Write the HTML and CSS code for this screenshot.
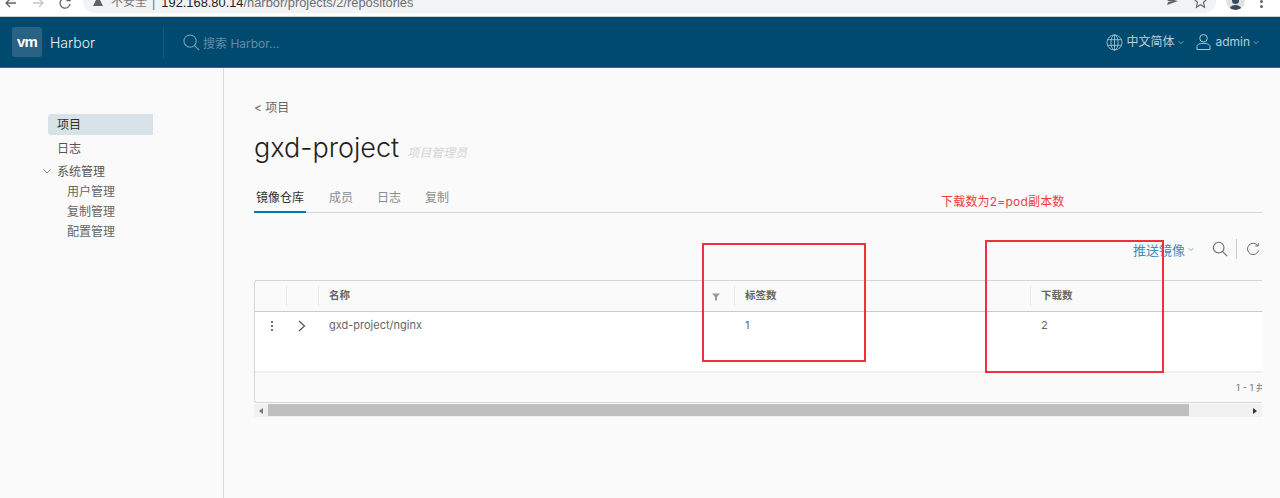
FILE: index.html
```html
<!DOCTYPE html>
<html lang="zh">
<head>
<meta charset="utf-8">
<title>Harbor</title>
<link rel="stylesheet" href="styles.css">
</head>
<body>
<div class="chrome">
  <div class="nav-icons">
    <svg class="c-icon" viewBox="0 0 12 12"><path d="M11 3H1.500M5 -1 1 3l4 4" /></svg>
    <svg class="c-icon faint" viewBox="0 0 12 12"><path d="M1 3h9.500M7 -1l4 4-4 4" /></svg>
    <svg class="c-icon" viewBox="0 0 12 12"><path d="M9.500 -.5A5 5 0 1 0 11 4M11 -3v3.500H7.500" /></svg>
  </div>
  <div class="omnibox">
    <span class="warn"></span>
    <span class="insecure">不安全</span>
    <span class="pipe">|</span>
    <span class="url"><b>192.168.80.14</b>/harbor/projects/2/repositories</span>
    <span class="omni-right">
      <svg class="share" viewBox="0 0 14 10"><path d="M0 1l13 3.500L1 9l1-3.500h5l-5-1z"/></svg>
      <svg class="star" viewBox="0 0 14 14"><path d="M7 -3l2 5 5 .4-3.800 3.200L11.400 11 7 8.300 2.600 11l1.200-5.400L0 2.400 5 2z"/></svg>
    </span>
  </div>
  <div class="avatar"><span class="avatar-head"></span><span class="avatar-body"></span></div>
  <div class="dots"><i></i><i></i></div>
</div>

<header class="topbar">
  <div class="brand">
    <span class="logo">vm</span>
    <span class="brand-name">Harbor</span>
  </div>
  <div class="search">
    <svg class="search-icon" viewBox="0 0 18 18"><circle cx="7.500" cy="7.500" r="6.500"/><path d="M12.300 12.300 17 17"/></svg>
    <span>搜索 Harbor...</span>
  </div>
  <div class="top-right">
    <svg class="globe" viewBox="0 0 18 18"><circle cx="9" cy="9" r="8"/><ellipse cx="9" cy="9" rx="3.800" ry="8"/><path d="M9 1v16M1.500 6h15M1.500 12h15"/></svg>
    <span class="top-label">中文简体</span>
    <svg class="caret" viewBox="0 0 8 5"><path d="M1 1l3 3 3-3"/></svg>
    <svg class="user" viewBox="0 0 16 18"><circle cx="8" cy="5" r="4"/><path d="M1 17v-3c0-2 2-3.500 7-3.500s7 1.500 7 3.500v3z"/></svg>
    <span class="top-label">admin</span>
    <svg class="caret caret-end" viewBox="0 0 8 5"><path d="M1 1l3 3 3-3"/></svg>
  </div>
</header>

<div class="layout">
  <nav class="sidebar">
    <a class="side-item active">项目</a>
    <a class="side-item">日志</a>
    <div class="side-group">
      <svg class="group-caret" viewBox="0 0 8 5"><path d="M.500 .500 4 4 7.500 .500"/></svg>
      <span>系统管理</span>
    </div>
    <a class="side-sub">用户管理</a>
    <a class="side-sub">复制管理</a>
    <a class="side-sub">配置管理</a>
  </nav>

  <main class="content">
    <div class="crumb">&lt; 项目</div>
    <div class="title-row">
      <h1>gxd-project</h1>
      <span class="role">项目管理员</span>
    </div>
    <div class="tabs">
      <span class="tab current">镜像仓库</span>
      <span class="tab">成员</span>
      <span class="tab">日志</span>
      <span class="tab">复制</span>
    </div>
    <div class="toolbar">
      <span class="push">推送镜像</span>
      <svg class="push-caret" viewBox="0 0 8 5"><path d="M1 1l3 3 3-3"/></svg>
      <svg class="tool-search" viewBox="0 0 18 18"><circle cx="7.500" cy="7.500" r="6"/><path d="M12 12l5 5"/></svg>
      <span class="tool-sep"></span>
      <svg class="tool-refresh" viewBox="0 0 16 16"><path d="M13.500 3.500A6.500 6.500 0 1 0 14.500 9M14 .5v3.500h-3.500"/></svg>
    </div>
    <div class="grid">
      <div class="g-row head">
        <div class="cell"></div>
        <div class="cell sep"></div>
        <div class="cell sep name-col">名称<svg class="filter" viewBox="0 0 8 8"><path d="M0 .500h8L5 4v3.500H3V4z"/></svg></div>
        <div class="cell sep">标签数</div>
        <div class="cell sep">下载数</div>
      </div>
      <div class="g-row body">
        <div class="cell dots-cell"><i></i><i></i><i></i></div>
        <div class="cell chev-cell"><svg class="chev" viewBox="0 0 8 12"><path d="M1 1l5.500 5L1 11"/></svg></div>
        <div class="cell">gxd-project/nginx</div>
        <div class="cell">1</div>
        <div class="cell">2</div>
      </div>
      <div class="g-foot">1 - 1 共 1 条记录</div>
    </div>
    <div class="scrollbar">
      <span class="arrow-l"></span>
      <span class="thumb"></span>
      <span class="arrow-r"></span>
    </div>
  </main>
</div>

<div class="note-box note-a"></div>
<div class="note-box note-b"></div>
<div class="note-text">下载数为2=pod副本数</div>
</body>
</html>
```
FILE: styles.css
```css
* { box-sizing: border-box; }
html, body { margin: 0; padding: 0; height: 498px; overflow: hidden; }
body {
  position: relative;
  display: flex;
  flex-direction: column;
  background: #fafafa;
  color: #565656;
  font-family: Inter, "Noto Sans CJK SC", sans-serif;
}

/* browser strip */
.chrome {
  height: 17px;
  flex: none;
  background: #fff;
  border-bottom: 1px solid #c9d3d8;
  display: flex;
  align-items: flex-start;
  overflow: hidden;
}
.nav-icons { width: 83px; height: 12px; flex: none; display: flex; gap: 15px; padding-left: 5px; }
.c-icon { width: 12px; height: 12px; flex: none; fill: none; stroke: #5f6368; stroke-width: 1.300; }
.c-icon.faint { stroke: #c4c7ca; }
.omnibox {
  width: 1133px;
  height: 13px;
  flex: none;
  background: #f1f3f4;
  border-radius: 0 0 12px 12px;
  display: flex;
  align-items: center;
  font: 12.850px/13px "Liberation Sans", "Noto Sans CJK SC", sans-serif;
  color: #6b6f73;
  padding-left: 10px;
  overflow: hidden;
}
.omnibox > span { position: relative; top: -4px; }
.omnibox > .warn { width: 0; height: 0; border-left: 5px solid transparent; border-right: 5px solid transparent; border-bottom: 10px solid #5f6368; margin-right: 8px; top: -6px; }
.insecure { margin-right: 5px; color: #777; font-size: 12px; }
.pipe { margin-right: 6px; color: #777; }
.url b { font-weight: 400; color: #202124; }
.omnibox > .omni-right { top: 0; height: 13px; margin-left: auto; display: flex; align-items: flex-start; gap: 15px; padding-right: 9px; }
.share { width: 13px; height: 9px; fill: #5f6368; margin-top: -3px; }
.star { width: 13px; height: 13px; fill: none; stroke: #5f6368; stroke-width: 1.200; margin-top: -3px; }
.avatar {
  position: relative;
  width: 19px;
  height: 10px;
  margin-left: 10px;
  background: #dfe1e5;
  border-radius: 0 0 10px 10px;
  overflow: hidden;
  flex: none;
}
.avatar-head { position: absolute; left: 6px; top: -3px; width: 7px; height: 7px; background: #3c4a5c; border-radius: 50%; }
.avatar-body { position: absolute; left: 3px; top: 5px; width: 13px; height: 7px; background: #3c4a5c; border-radius: 6px 6px 0 0; }
.dots { display: flex; flex-direction: column; gap: 2px; margin-left: 15px; }
.dots i { width: 3px; height: 3px; border-radius: 50%; background: #5f6368; }

/* header */
.topbar {
  height: 51px;
  flex: none;
  background: #004a70;
  border-bottom: 1px solid #2a6a8e;
  display: flex;
  align-items: center;
  color: #fff;
}
.brand { width: 164px; height: 32px; padding-left: 12px; display: flex; align-items: center; flex: none; border-right: 1px solid #0f5a80; }
.logo {
  width: 30px;
  height: 30px;
  border-radius: 3px;
  background: #2a6283;
  font: 700 15px/29px "Liberation Sans", sans-serif;
  letter-spacing: -.8px;
  text-align: center;
}
.brand-name { margin-left: 8px; font-size: 14px; font-weight: 300; color: #e8f1f5; }
.search { margin-left: 19px; display: flex; align-items: center; gap: 3px; font-size: 12px; color: #5f8fa8; }
.search-icon { width: 17px; height: 17px; fill: none; stroke: #7da3b8; stroke-width: 1.100; }
.top-right { margin-left: auto; padding-right: 21px; display: flex; align-items: center; color: #b9d0dc; font-size: 12px; }
.globe { width: 17px; height: 17px; fill: none; stroke: #a9c4d2; stroke-width: .9; margin-right: 3px; }
.top-label { font-size: 12px; line-height: 16px; }
.caret { width: 6px; height: 5px; margin-left: 4px; fill: none; stroke: #a9c4d2; }
.caret-end { margin-left: 3px; }
.user { width: 15px; height: 18px; margin: 0 4px 0 12px; fill: none; stroke: #b9d0dc; stroke-width: 1; }

/* layout */
.layout { flex: 1; display: flex; min-height: 0; }
.sidebar {
  width: 224px;
  flex: none;
  border-right: 1px solid #d7d7d7;
  padding: 46px 0 0 48px;
  font-size: 12px;
  color: #565656;
}
.side-item { display: block; width: 105px; height: 21px; line-height: 21px; padding-left: 9px; margin-bottom: 3px; }
.side-item.active { background: #d8e3e9; color: #313131; border-radius: 3px 0 0 3px; }
.side-group { position: relative; height: 20px; line-height: 20px; padding-left: 9px; margin-top: 2px; }
.group-caret { position: absolute; left: -5px; top: 7px; width: 8px; height: 5px; fill: none; stroke: #8b8b8b; }
.side-sub { display: block; height: 20px; line-height: 20px; padding-left: 19px; color: #666; }

/* content */
.content { flex: 1; min-width: 0; padding: 31px 18px 0 30px; }
.crumb { font-size: 12px; line-height: 18px; color: #666; }
.title-row { display: flex; align-items: flex-end; margin-top: 13px; height: 36px; }
h1 { margin: 0; font-size: 27px; line-height: 36px; font-weight: 300; color: #1f1f1f; }
.role { margin: 0 0 6px 8px; font-size: 12px; font-style: italic; color: #d4d4d4; }
.tabs { display: flex; gap: 24px; margin-top: 18px; height: 29px; border-bottom: 1px solid #d7d7d7; font-size: 12px; color: #8c8c8c; }
.tab { height: 29px; line-height: 22px; padding-top: 3px; }
.tab.current { color: #333; border-bottom: 2px solid #0079b8; padding: 3px 2px 0; margin-right: -1px; }
.toolbar { display: flex; align-items: center; justify-content: flex-end; height: 30px; margin-top: 21px; padding-right: 2px; }
.push { font-size: 13px; color: #3b8fc0; }
.push-caret { width: 6px; height: 5px; margin-left: 3px; fill: none; stroke: #3b8fc0; }
.tool-search { width: 16px; height: 16px; margin-left: 18px; fill: none; stroke: #666; stroke-width: 1.200; }
.tool-sep { width: 1px; height: 20px; background: #ccc; margin: 0 9px 0 8px; }
.tool-refresh { width: 14px; height: 15px; fill: none; stroke: #666; stroke-width: 1.100; }

.grid {
  margin-top: 16px;
  height: 123px;
  border: 1px solid #d7d7d7;
  border-right: 0;
  border-radius: 3px 0 0 3px;
  overflow: hidden;
  font-size: 11px;
  display: flex;
  flex-direction: column;
}
.g-row { display: grid; flex: none; grid-template-columns: 31px 32px 416px 296px 1fr; }
.head { height: 31px; border-bottom: 1px solid #ccc; font-weight: 700; color: #666; font-size: 10.500px; }
.head .cell { height: 30px; line-height: 30px; padding-left: 11px; position: relative; }
.head .sep::before { content: ""; position: absolute; left: 0; top: 5px; height: 20px; width: 1px; background: #e8e8e8; }
.filter { position: absolute; right: 14px; top: 12px; width: 8px; height: 8px; fill: #9a9a9a; }
.body { height: 61px; background: #fff; border-bottom: 2px solid #eee; color: #666; }
.body .cell { padding: 6px 0 0 11px; line-height: 15px; }
.body .dots-cell { display: flex; flex-direction: column; align-items: center; gap: 2px; padding: 9px 0 0 2px; }
.dots-cell i { width: 2px; height: 2px; background: #444; border-radius: 50%; }
.body .chev-cell { padding: 8px 0 0 12px; }
.chev { width: 8px; height: 12px; fill: none; stroke: #555; stroke-width: 1.200; display: block; }
.g-foot { flex: 1; display: flex; align-items: center; padding: 0 0 2px 981px; white-space: nowrap; font-size: 9.500px; color: #777; overflow: hidden; }

.scrollbar { position: relative; height: 13px; margin-top: 1px; background: #f1f1f1; display: flex; align-items: center; }
.thumb { position: absolute; left: 14px; width: 921px; top: 0; height: 12px; background: #bfbfbf; }
.arrow-l { position: absolute; left: 5px; border: 3px solid transparent; border-left-width: 0; border-right: 4px solid #777; }
.arrow-r { position: absolute; right: 5px; border: 3px solid transparent; border-right-width: 0; border-left: 4px solid #333; }

/* annotations */
.note-box { position: absolute; border: 2px solid #f0303c; }
.note-a { left: 702px; top: 243px; width: 164px; height: 119px; }
.note-b { left: 985px; top: 240px; width: 179px; height: 133px; }
.note-text { position: absolute; left: 941px; top: 193px; font-size: 12px; line-height: 17px; letter-spacing: .2px; color: #f5383f; }
```
